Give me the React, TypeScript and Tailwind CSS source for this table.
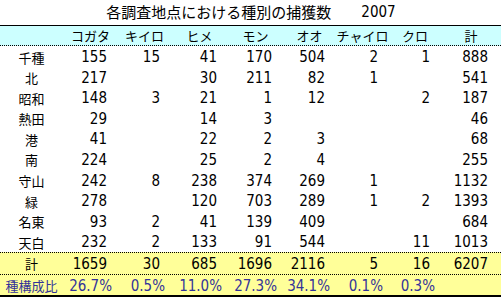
import React from 'react';

const cols = 'grid grid-cols-[63px_55px_53px_57px_55px_53px_53px_52px_60px]';
const num = "[font-family:'DejaVu_Sans_Condensed','DejaVu_Sans','Noto_Sans_CJK_JP',sans-serif] font-stretch-condensed text-[15px]";
const jp = "[font-family:'Noto_Sans_CJK_JP',sans-serif] text-[13px]";

const heads = ['コガタ', 'キイロ', 'ヒメ', 'モン', 'オオ', 'チャイロ', 'クロ', '計'];

const rows: [string, (number | null)[]][] = [
    ['千種', [155, 15, 41, 170, 504, 2, 1, 888]],
    ['北', [217, null, 30, 211, 82, 1, null, 541]],
    ['昭和', [148, 3, 21, 1, 12, null, 2, 187]],
    ['熱田', [29, null, 14, 3, null, null, null, 46]],
    ['港', [41, null, 22, 2, 3, null, null, 68]],
    ['南', [224, null, 25, 2, 4, null, null, 255]],
    ['守山', [242, 8, 238, 374, 269, 1, null, 1132]],
    ['緑', [278, null, 120, 703, 289, 1, 2, 1393]],
    ['名東', [93, 2, 41, 139, 409, null, null, 684]],
    ['天白', [232, 2, 133, 91, 544, null, 11, 1013]],
];

const total = [1659, 30, 685, 1696, 2116, 5, 16, 6207];
const ratio = ['26.7%', '0.5%', '11.0%', '27.3%', '34.1%', '0.1%', '0.3%', ''];

const NumCell: React.FC<{ v: number | null; last?: boolean }> = ({ v, last }) => (
    <div className={`${num} flex items-center justify-end ${last ? 'pr-[13px]' : 'pr-[11px]'}`}>
        {v ?? ''}
    </div>
);

export default function App() {
    return (
        <div className="w-[501px] h-[299px] bg-white text-black overflow-hidden">
            <div className="h-[25px] flex items-center justify-center pl-[1px] gap-[30px]">
                <span className={"[font-family:'Noto_Sans_CJK_JP',sans-serif] text-[15px]"}>各調査地点における種別の捕獲数</span>
                <span className={num}>2007</span>
            </div>

            <div className={`${cols} h-[21px] bg-[#ccffff] border-t border-black border-b border-b-black border-dotted [border-top-style:solid]`}>
                <div />
                {heads.map((h) => (
                    <div key={h} className={`${jp} flex items-center justify-center`}>{h}</div>
                ))}
            </div>

            {rows.map(([name, vals]) => (
                <div key={name} className={`${cols} h-[20.6px]`}>
                    <div className={`${jp} flex items-center justify-center`}>{name}</div>
                    {vals.map((v, i) => (
                        <NumCell key={i} v={v} last={i === 7} />
                    ))}
                </div>
            ))}

            <div className={`${cols} h-[22px] bg-[#ffff99] border-t border-dotted border-black`}>
                <div className={`${jp} flex items-center justify-center`}>計</div>
                {total.map((v, i) => (
                    <NumCell key={i} v={v} last={i === 7} />
                ))}
            </div>

            <div className={`${cols} h-[23px] bg-[#ffff99] border-t border-dotted border-black border-b-2 border-b-black [border-bottom-style:solid] text-[#333399]`}>
                <div className={`${jp} flex items-center justify-center`}>種構成比</div>
                {ratio.map((v, i) => (
                    <div key={i} className={`${num} flex items-center justify-end pr-[6px]`}>{v}</div>
                ))}
            </div>
        </div>
    );
}
